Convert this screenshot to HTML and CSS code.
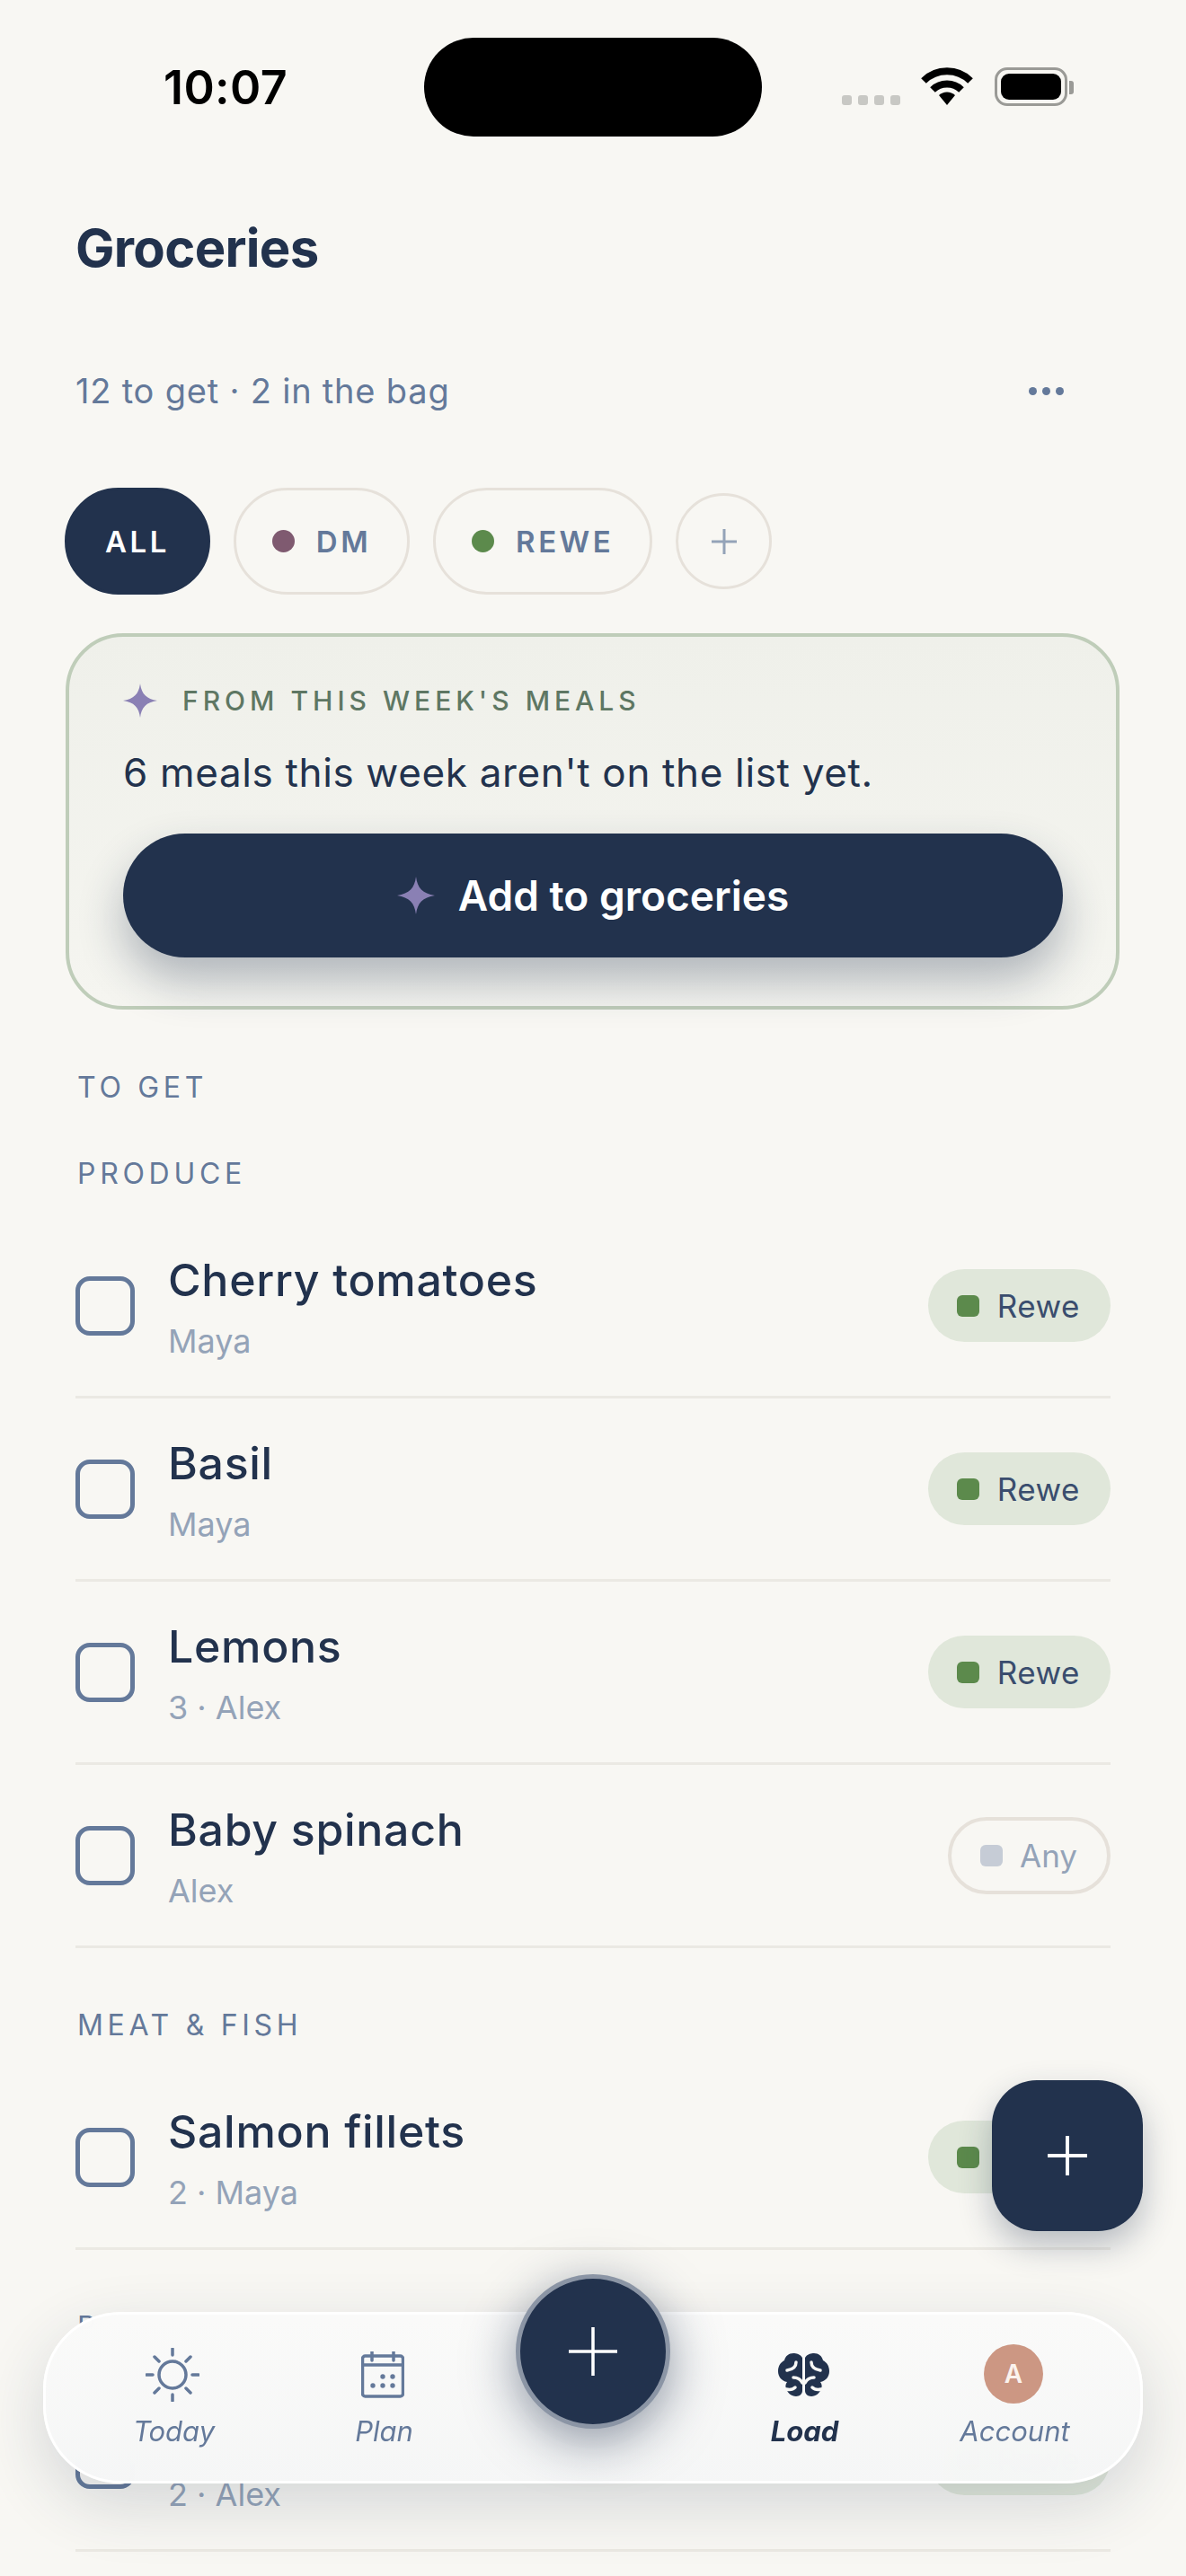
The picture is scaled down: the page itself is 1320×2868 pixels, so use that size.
FILE: index.html
```html
<!DOCTYPE html>
<html>
  <head>
    <title>Groceries</title>
    <link rel="stylesheet" href="styles.css">
  </head>
  <body>
    <div class="screen">
      <div class="status">
        <span class="time">10:07</span>
        <div class="island"></div>
        <div class="status-icons">
          <div class="signal"><i></i><i></i><i></i><i></i></div>
          <svg class="wifi" width="58" height="42" viewBox="0 0 58 42">
            <path d="M3 15 A37 37 0 0 1 55 15" fill="none" stroke="#000" stroke-width="8"/>
            <path d="M13 25 A23 23 0 0 1 45 25" fill="none" stroke="#000" stroke-width="8"/>
            <path d="M29 42 L20 31 A13 13 0 0 1 38 31 Z" fill="#000"/>
          </svg>
          <div class="battery"><div class="battery-fill"></div></div>
          <div class="battery-nub"></div>
        </div>
      </div>

      <h1 class="title">Groceries</h1>

      <div class="sub-row">
        <span class="sub-text">12 to get · 2 in the bag</span>
        <div class="more"><i></i><i></i><i></i></div>
      </div>

      <div class="chips">
        <div class="chip chip-active">ALL</div>
        <div class="chip"><span class="chip-dot dot-dm"></span>DM</div>
        <div class="chip"><span class="chip-dot dot-rewe"></span>REWE</div>
        <div class="chip-add">
          <svg width="30" height="30" viewBox="0 0 30 30">
            <path d="M15 1 V29 M1 15 H29" stroke="#94a3b8" stroke-width="3" fill="none"/>
          </svg>
        </div>
      </div>

      <div class="meals-card">
        <div class="meals-label">
          <svg width="38" height="40" viewBox="0 0 40 40">
            <path class="sparkle" d="M20 0 C21.5 12 27 18 40 20 C27 22 21.5 28 20 40 C18.5 28 13 22 0 20 C13 18 18.5 12 20 0 Z"/>
          </svg>
          <span>FROM THIS WEEK'S MEALS</span>
        </div>
        <p class="meals-text">6 meals this week aren't on the list yet.</p>
        <button class="meals-btn" type="button">
          <svg width="42" height="42" viewBox="0 0 40 40">
            <path class="sparkle" d="M20 0 C21.5 12 27 18 40 20 C27 22 21.5 28 20 40 C18.5 28 13 22 0 20 C13 18 18.5 12 20 0 Z"/>
          </svg>
          Add to groceries
        </button>
      </div>

      <div class="list-head">TO GET</div>

      <div class="section-head">PRODUCE</div>
      <div class="row">
        <div class="check"></div>
        <div class="row-main">
          <div class="row-title">Cherry tomatoes</div>
          <div class="row-sub">Maya</div>
        </div>
        <div class="pill"><span class="pill-dot"></span>Rewe</div>
      </div>
      <div class="row">
        <div class="check"></div>
        <div class="row-main">
          <div class="row-title">Basil</div>
          <div class="row-sub">Maya</div>
        </div>
        <div class="pill"><span class="pill-dot"></span>Rewe</div>
      </div>
      <div class="row">
        <div class="check"></div>
        <div class="row-main">
          <div class="row-title">Lemons</div>
          <div class="row-sub">3 · Alex</div>
        </div>
        <div class="pill"><span class="pill-dot"></span>Rewe</div>
      </div>
      <div class="row">
        <div class="check"></div>
        <div class="row-main">
          <div class="row-title">Baby spinach</div>
          <div class="row-sub">Alex</div>
        </div>
        <div class="pill pill-any"><span class="pill-dot"></span>Any</div>
      </div>

      <div class="section-head section-next">MEAT &amp; FISH</div>
      <div class="row">
        <div class="check"></div>
        <div class="row-main">
          <div class="row-title">Salmon fillets</div>
          <div class="row-sub">2 · Maya</div>
        </div>
        <div class="pill"><span class="pill-dot"></span>Rewe</div>
      </div>

      <div class="section-head section-next">P</div>
      <div class="row">
        <div class="check"></div>
        <div class="row-main">
          <div class="row-title">&nbsp;</div>
          <div class="row-sub">2 · Alex</div>
        </div>
        <div class="pill"><span class="pill-dot"></span>Rewe</div>
      </div>

      <div class="fab">
        <svg width="44" height="44" viewBox="0 0 44 44">
          <path d="M22 0 V44 M0 22 H44" stroke="#fff" stroke-width="4" fill="none"/>
        </svg>
      </div>

      <nav class="tabbar">
        <div class="tab">
          <svg class="tab-icon" width="60" height="60" viewBox="0 0 60 60">
            <g class="line-icon">
              <circle cx="30" cy="30" r="15"/>
              <path d="M30 1 V8 M30 52 V59 M1 30 H8 M52 30 H59 M10 10 L15 15 M45 45 L50 50 M50 10 L45 15 M15 45 L10 50"/>
            </g>
          </svg>
          <span>Today</span>
        </div>
        <div class="tab">
          <svg class="tab-icon" width="48" height="52" viewBox="0 0 48 52">
            <g class="line-icon">
              <rect x="1.5" y="5" width="45" height="45" rx="3"/>
              <path d="M1.5 15 H46.5 M12 0 V10 M36 0 V10"/>
            </g>
            <g class="cal-dots">
              <circle cx="24" cy="28" r="2.7"/>
              <circle cx="35" cy="28" r="2.7"/>
              <circle cx="13" cy="38" r="2.7"/>
              <circle cx="24" cy="38" r="2.7"/>
              <circle cx="35" cy="38" r="2.7"/>
            </g>
          </svg>
          <span>Plan</span>
        </div>
        <div class="tab-gap"></div>
        <div class="tab tab-active">
          <svg class="tab-icon" width="57" height="48" viewBox="0 0 57 48">
            <g id="lobe">
              <path class="brain" d="M27 5 C25 1 20 0 17 0 C12 0 8 3 7 8 C3 10 0 14 0 20 C0 26 4 31 10 32 C8 35 8 37 9 39 C10 44 15 48 20 48 C24 48 27 45 27 42 Z"/>
              <path class="brain-cut" d="M20 10 C20 15 17 18 10 19 M17 27 C21 27 25 29 27 33 M9 40 C13 41 17 40 19 38"/>
            </g>
            <use href="#lobe" transform="matrix(-1 0 0 1 57 0)"/>
          </svg>
          <span>Load</span>
        </div>
        <div class="tab">
          <div class="avatar">A</div>
          <span>Account</span>
        </div>
        <div class="center-btn">
          <svg width="54" height="54" viewBox="0 0 54 54">
            <path d="M27 0 V54 M0 27 H54" stroke="#fff" stroke-width="3.5" fill="none"/>
          </svg>
        </div>
      </nav>
    </div>
  </body>
</html>
```

FILE: styles.css
```css
* {
  box-sizing: border-box;
}

body {
  margin: 0;
  background-color: #f8f7f3;
  font-family: Inter, "Liberation Sans", sans-serif;
  color: #22324d;
}

.screen {
  position: relative;
  width: 1320px;
  height: 2868px;
  overflow: hidden;
  padding: 0 84px;
}

/* status bar */
.status {
  position: relative;
  height: 241px;
  margin: 0 -84px;
  padding-top: 42px;
  display: flex;
  justify-content: center;
}

.time {
  position: absolute;
  left: 182px;
  top: 66px;
  font-size: 52px;
  line-height: 64px;
  font-weight: 600;
  letter-spacing: 0.4px;
  color: #000;
}

.island {
  width: 376px;
  height: 110px;
  border-radius: 55px;
  background-color: #000;
}

.status-icons {
  position: absolute;
  left: 937px;
  top: 75px;
  display: flex;
  align-items: flex-start;
}

.signal {
  display: flex;
  gap: 7px;
  margin-top: 31px;
  margin-right: 23px;
}

.signal i {
  width: 11px;
  height: 11px;
  border-radius: 3px;
  background-color: #c8c8c4;
}

.battery {
  width: 81px;
  height: 43px;
  margin-left: 24px;
  padding: 4px;
  border: 3px solid #9a9a96;
  border-radius: 14px;
}

.battery-fill {
  width: 100%;
  height: 100%;
  border-radius: 9px;
  background-color: #000;
}

.battery-nub {
  width: 5px;
  height: 15px;
  margin: 15px 0 0 2px;
  border-radius: 0 3px 3px 0;
  background-color: #9a9a96;
}

/* header */
.title {
  margin: 0;
  font-size: 58px;
  line-height: 70px;
  font-weight: 700;
  letter-spacing: -0.7px;
}

.sub-row {
  height: 60px;
  margin-top: 94px;
  display: flex;
  justify-content: space-between;
  align-items: center;
}

.sub-text {
  font-size: 38px;
  letter-spacing: 0.8px;
  color: #64799a;
}

.more {
  display: flex;
  gap: 6px;
  margin-right: 52px;
}

.more i {
  width: 9px;
  height: 9px;
  border-radius: 50%;
  background-color: #64799a;
}

/* chips */
.chips {
  height: 119px;
  margin: 78px -12px 0;
  display: flex;
  align-items: center;
  gap: 26px;
}

.chip {
  height: 119px;
  padding: 0 40px;
  display: flex;
  align-items: center;
  gap: 24px;
  border: 3px solid #e6e1da;
  border-radius: 60px;
  font-size: 33px;
  font-weight: 600;
  letter-spacing: 3.5px;
  color: #64799a;
}

.chip-active {
  padding: 0 42px;
  background-color: #22324d;
  border-color: #22324d;
  color: #fff;
}

.chip-dot {
  width: 25px;
  height: 25px;
  border-radius: 50%;
}

.dot-dm {
  background-color: #7f5a70;
}

.dot-rewe {
  background-color: #5c8a4c;
}

.chip-add {
  width: 107px;
  height: 107px;
  display: flex;
  align-items: center;
  justify-content: center;
  border: 3px solid #e6e1da;
  border-radius: 50%;
}

/* meals card */
.meals-card {
  margin: 43px -11px 0;
  width: 1173px;
  height: 419px;
  padding: 51px 59px 0 60px;
  background: linear-gradient(180deg, #eff0ea, #f5f5f0);
  border: 4px solid #bfcdb9;
  border-radius: 64px;
}

.meals-label {
  height: 40px;
  display: flex;
  align-items: center;
  gap: 28px;
  font-size: 30px;
  font-weight: 500;
  letter-spacing: 5px;
  color: #5e7763;
}

.sparkle {
  fill: #8a80b4;
}

.meals-text {
  margin: 30px 0 0;
  font-size: 44px;
  line-height: 60px;
  letter-spacing: 0.65px;
  color: #22324d;
}

.meals-btn {
  width: 100%;
  height: 138px;
  margin-top: 38px;
  display: flex;
  align-items: center;
  justify-content: center;
  gap: 26px;
  background-color: #22324d;
  border: none;
  border-radius: 69px;
  box-shadow: 0 26px 50px rgba(34, 50, 77, 0.32);
  font-family: inherit;
  font-size: 46px;
  font-weight: 600;
  color: #fff;
}

/* list */
.list-head,
.section-head {
  height: 40px;
  line-height: 40px;
  padding-left: 2px;
  font-size: 32px;
  letter-spacing: 4.7px;
  color: #64799a;
}

.list-head {
  margin-top: 67px;
}

.section-head {
  margin-top: 56px;
  margin-bottom: 26px;
}

.section-next {
  margin-top: 66px;
}

.row {
  height: 204px;
  display: flex;
  align-items: center;
  border-bottom: 3px solid #ebe9e3;
}

.check {
  width: 66px;
  height: 66px;
  flex-shrink: 0;
  border: 5px solid #64799a;
  border-radius: 16px;
}

.row-main {
  flex: 1;
  margin-left: 37px;
}

.row-title {
  font-size: 50px;
  line-height: 64px;
  font-weight: 500;
  letter-spacing: 0.7px;
}

.row-sub {
  margin-top: 14px;
  font-size: 36px;
  line-height: 44px;
  color: #94a3b8;
}

.pill {
  height: 81px;
  padding: 0 34px 0 32px;
  display: flex;
  align-items: center;
  gap: 20px;
  background-color: #e0e7da;
  border-radius: 41px;
  font-size: 35px;
  letter-spacing: 0.5px;
  color: #3a4d6e;
}

.pill-dot {
  width: 25px;
  height: 24px;
  border-radius: 6px;
  background-color: #5c8a4c;
}

.pill-any {
  height: 86px;
  padding: 0 33px 0 32px;
  gap: 19px;
  background-color: transparent;
  border: 4px solid #e6e1da;
  border-radius: 43px;
  letter-spacing: 0;
  color: #94a3b8;
}

.pill-any .pill-dot {
  background-color: #c6ccd6;
}

/* floating buttons */
.fab {
  position: absolute;
  left: 1104px;
  top: 2316px;
  width: 168px;
  height: 168px;
  display: flex;
  align-items: center;
  justify-content: center;
  background-color: #22324d;
  border-radius: 50px;
  box-shadow: 0 16px 36px rgba(34, 50, 77, 0.3);
}

.tabbar {
  position: absolute;
  left: 48px;
  top: 2574px;
  width: 1224px;
  height: 191px;
  padding: 0 24px;
  display: grid;
  grid-template-columns: repeat(5, 234px);
  background: linear-gradient(180deg, rgba(250, 250, 249, 0.98), rgba(245, 246, 246, 0.98));
  border: 3px solid #fff;
  border-radius: 86px;
  box-shadow: 0 24px 70px rgba(34, 50, 77, 0.16);
  backdrop-filter: blur(24px);
}

.tab {
  display: flex;
  flex-direction: column;
  align-items: center;
  font-size: 31px;
  font-style: italic;
  color: #64799a;
}

.tab span {
  position: absolute;
  top: 110px;
  margin-left: 3px;
  line-height: 40px;
}

.tab-icon {
  margin-top: 37px;
}

.tab:nth-child(2) .tab-icon {
  margin-top: 41px;
}

.tab-active .tab-icon {
  margin-top: 43px;
}

.tab-active {
  color: #22324d;
  font-weight: 700;
}

.line-icon {
  fill: none;
  stroke: #64799a;
  stroke-width: 3.5;
  stroke-linecap: round;
}

.cal-dots {
  fill: #64799a;
}

.brain {
  fill: #22324d;
}

.brain-cut {
  fill: none;
  stroke: #f8f8f6;
  stroke-width: 3.5;
  stroke-linecap: round;
}

.avatar {
  width: 66px;
  height: 66px;
  margin-top: 33px;
  display: flex;
  align-items: center;
  justify-content: center;
  background-color: #cc9783;
  border-radius: 50%;
  font-size: 28px;
  font-style: normal;
  font-weight: 600;
  color: #fbf3ee;
}

.center-btn {
  position: absolute;
  left: 523px;
  top: -45px;
  width: 172px;
  height: 172px;
  display: flex;
  align-items: center;
  justify-content: center;
  background-color: #22324d;
  border: 5px solid #8b95a5;
  border-radius: 50%;
  box-shadow: 0 14px 56px rgba(34, 50, 77, 0.5);
}
```
